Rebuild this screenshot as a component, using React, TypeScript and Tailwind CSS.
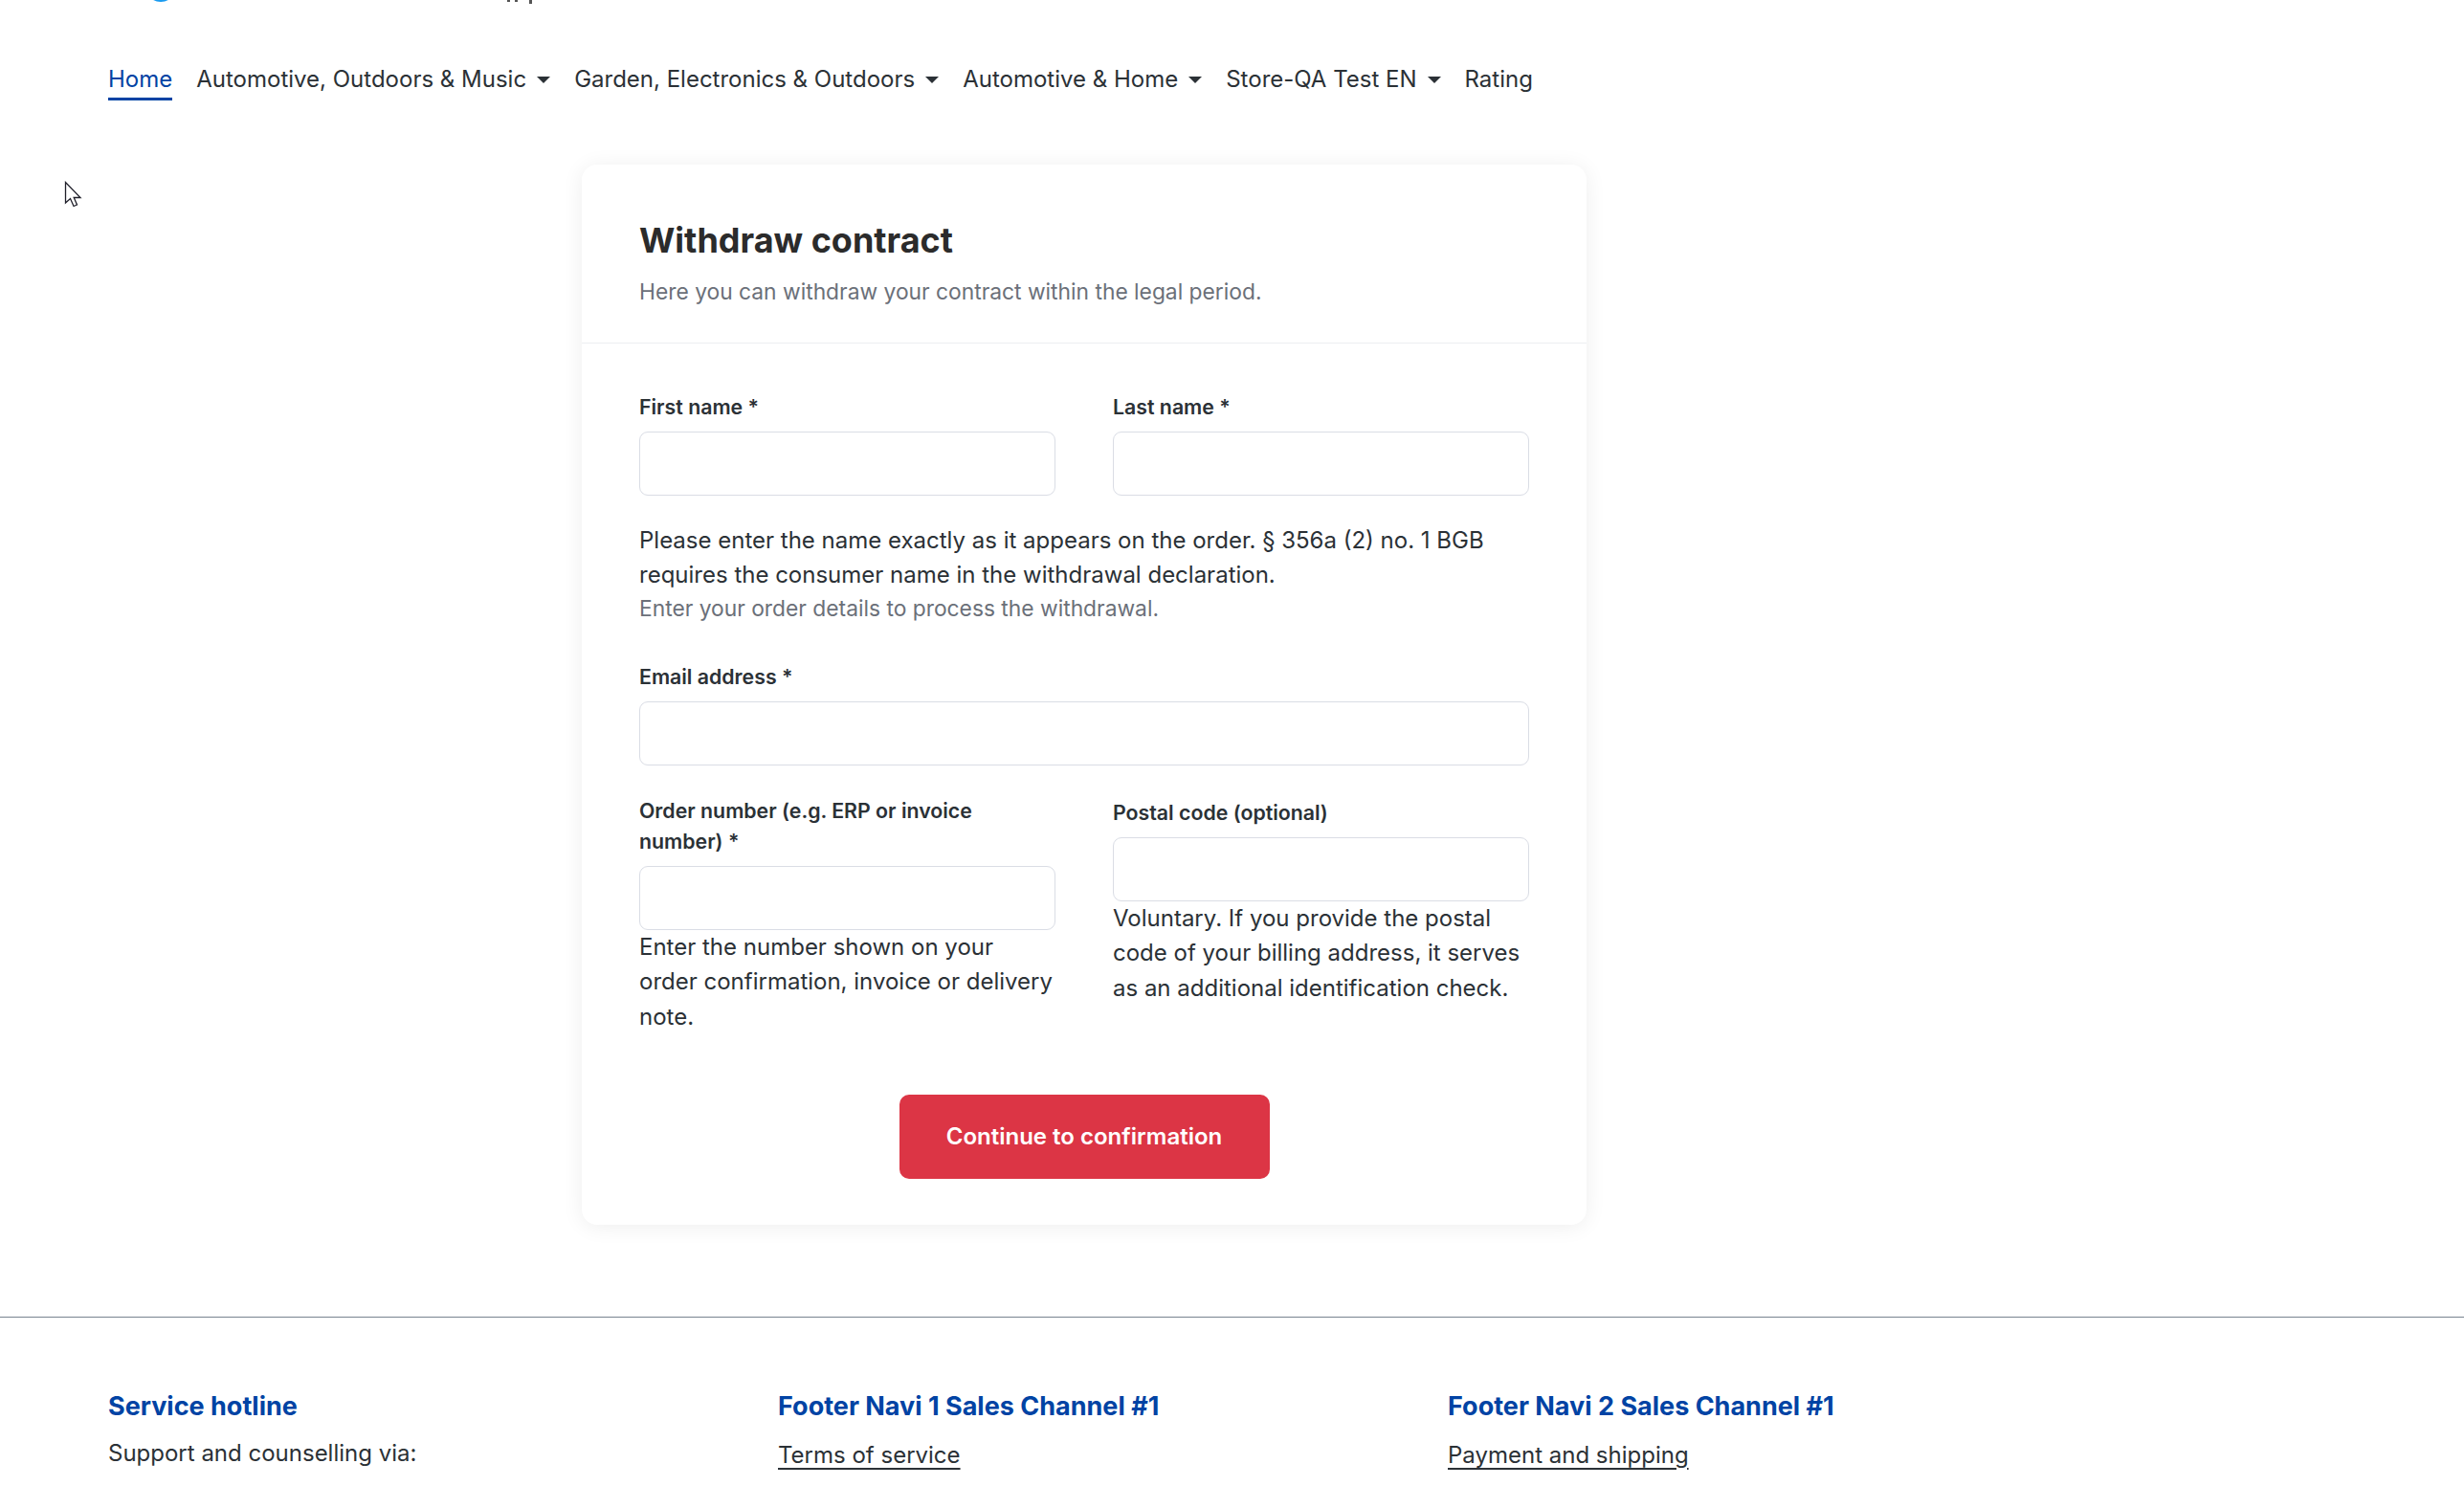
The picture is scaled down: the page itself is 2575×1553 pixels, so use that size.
import React from "react";

const font = { fontFamily: "Inter, 'Noto Sans', sans-serif" };

function Caret() {
  return <span className="ml-[11px] mt-[2px] inline-block h-0 w-0 border-x-[7px] border-t-[7px] border-x-transparent border-t-[#2b3136]" />;
}

function NavItem({ label, caret }: { label: string; caret?: boolean }) {
  return (
    <div className="flex flex-col">
      <div className="flex items-center text-[24px] leading-[35px] text-[#2b3136]">
        <span>{label}</span>
        {caret && <Caret />}
      </div>
    </div>
  );
}

function Field({ label, helper, extra }: { label: string; helper?: string; extra?: string }) {
  return (
    <div className={`flex flex-col ${extra ?? ""}`}>
      <label className="mb-[10px] text-[21.3px] font-semibold leading-[32px] text-[#2b3136]">{label}</label>
      <input className="h-[67px] w-full rounded-[9px] border border-[#dadde5] bg-white px-4 text-[24px] outline-none" />
      {helper && <p className="text-[24px] leading-[36.6px] text-[#2b3136]">{helper}</p>}
    </div>
  );
}

export default function App() {
  return (
    <div style={font} className="relative min-h-[1553px] w-full overflow-hidden bg-white">
      {/* cut-off logo */}
      <svg width="2575" height="4" className="block">
        <ellipse cx="168" cy="-10" rx="14" ry="12" fill="#1a9bf0" />
        <rect x="530" y="0" width="3" height="2" fill="#555" />
        <rect x="538" y="0" width="3" height="2" fill="#555" />
        <rect x="553" y="0" width="3" height="4" fill="#555" />
      </svg>

      {/* navigation */}
      <nav className="mt-[61px] flex items-start gap-[25px] pl-[113px]">
        <div className="flex flex-col">
          <span className="text-[24px] leading-[35px] text-[#0043a4]">Home</span>
          <span className="mt-[2px] h-[3px] w-full bg-[#0043a4]" />
        </div>
        <NavItem label="Automotive, Outdoors & Music" caret />
        <NavItem label="Garden, Electronics & Outdoors" caret />
        <NavItem label="Automotive & Home" caret />
        <NavItem label="Store-QA Test EN" caret />
        <NavItem label="Rating" />
      </nav>

      {/* card */}
      <main className="mt-[67px] pl-[608px]">
        <div className="w-[1050px] rounded-[16px] bg-white shadow-[0_2px_22px_rgba(0,0,0,0.07)]">
          <div className="border-b border-[#eceef1] px-[60px] pb-[36px] pt-[58px]">
            <h1 className="text-[36px] font-bold leading-[43px] text-[#2b2b2b]">Withdraw contract</h1>
            <p className="mt-[16px] text-[22.8px] leading-[32.8px] text-[#6b7079]">
              Here you can withdraw your contract within the legal period.
            </p>
          </div>
          <div className="px-[60px] pb-[48px] pt-[50px]">
            <div className="grid grid-cols-2 gap-x-[60px]">
              <Field label="First name *" />
              <Field label="Last name *" />
            </div>
            <p className="mt-[29px] text-[24px] leading-[36.6px] text-[#2b3136]">
              Please enter the name exactly as it appears on the order. § 356a (2) no. 1 BGB requires the consumer name in the withdrawal declaration.
            </p>
            <p className="text-[22.8px] leading-[32.8px] text-[#6b7079]">Enter your order details to process the withdrawal.</p>

            <div className="mt-[38px]">
              <Field label="Email address *" />
            </div>

            <div className="mt-[31px] grid grid-cols-2 items-start gap-x-[60px]">
              <Field
                label="Order number (e.g. ERP or invoice number) *"
                helper="Enter the number shown on your order confirmation, invoice or delivery note."
              />
              <Field
                label="Postal code (optional)"
                extra="pt-[2px]"
                helper="Voluntary. If you provide the postal code of your billing address, it serves as an additional identification check."
              />
            </div>

            <div className="mt-[62px] flex justify-center">
              <button className="h-[88px] w-[387px] rounded-[10px] bg-[#dc3545] text-[24px] font-semibold text-white">
                Continue to confirmation
              </button>
            </div>
          </div>
        </div>
      </main>

      {/* footer */}
      <footer className="mt-[96px] border-t border-[#798490] pt-[77px]">
        <div className="grid grid-cols-[700px_700px_700px] pl-[113px]">
          <div>
            <h3 className="text-[27px] font-bold leading-[32px] text-[#0043a4]">Service hotline</h3>
            <p className="mt-[15px] text-[24px] leading-[36.6px] text-[#2b3136]">Support and counselling via:</p>
          </div>
          <div>
            <h3 className="text-[27px] font-bold leading-[32px] text-[#0043a4]">Footer Navi 1 Sales Channel #1</h3>
            <a className="mt-[17px] block text-[24px] leading-[36.6px] text-[#2b3136] underline underline-offset-[5px]">Terms of service</a>
          </div>
          <div>
            <h3 className="text-[27px] font-bold leading-[32px] text-[#0043a4]">Footer Navi 2 Sales Channel #1</h3>
            <a className="mt-[17px] block text-[24px] leading-[36.6px] text-[#2b3136] underline underline-offset-[5px]">Payment and shipping</a>
          </div>
        </div>
      </footer>

      {/* mouse cursor */}
      <svg className="absolute left-[67px] top-[189px]" width="20" height="30" viewBox="0 0 20 30">
        <path d="M1.5 1.5 L1.5 23 L6.5 18.5 L10 26.5 L13.5 25 L10.2 17.5 L17 17.5 Z" fill="white" stroke="#1f1f2a" strokeWidth="1.3" strokeLinejoin="miter" />
      </svg>
    </div>
  );
}
